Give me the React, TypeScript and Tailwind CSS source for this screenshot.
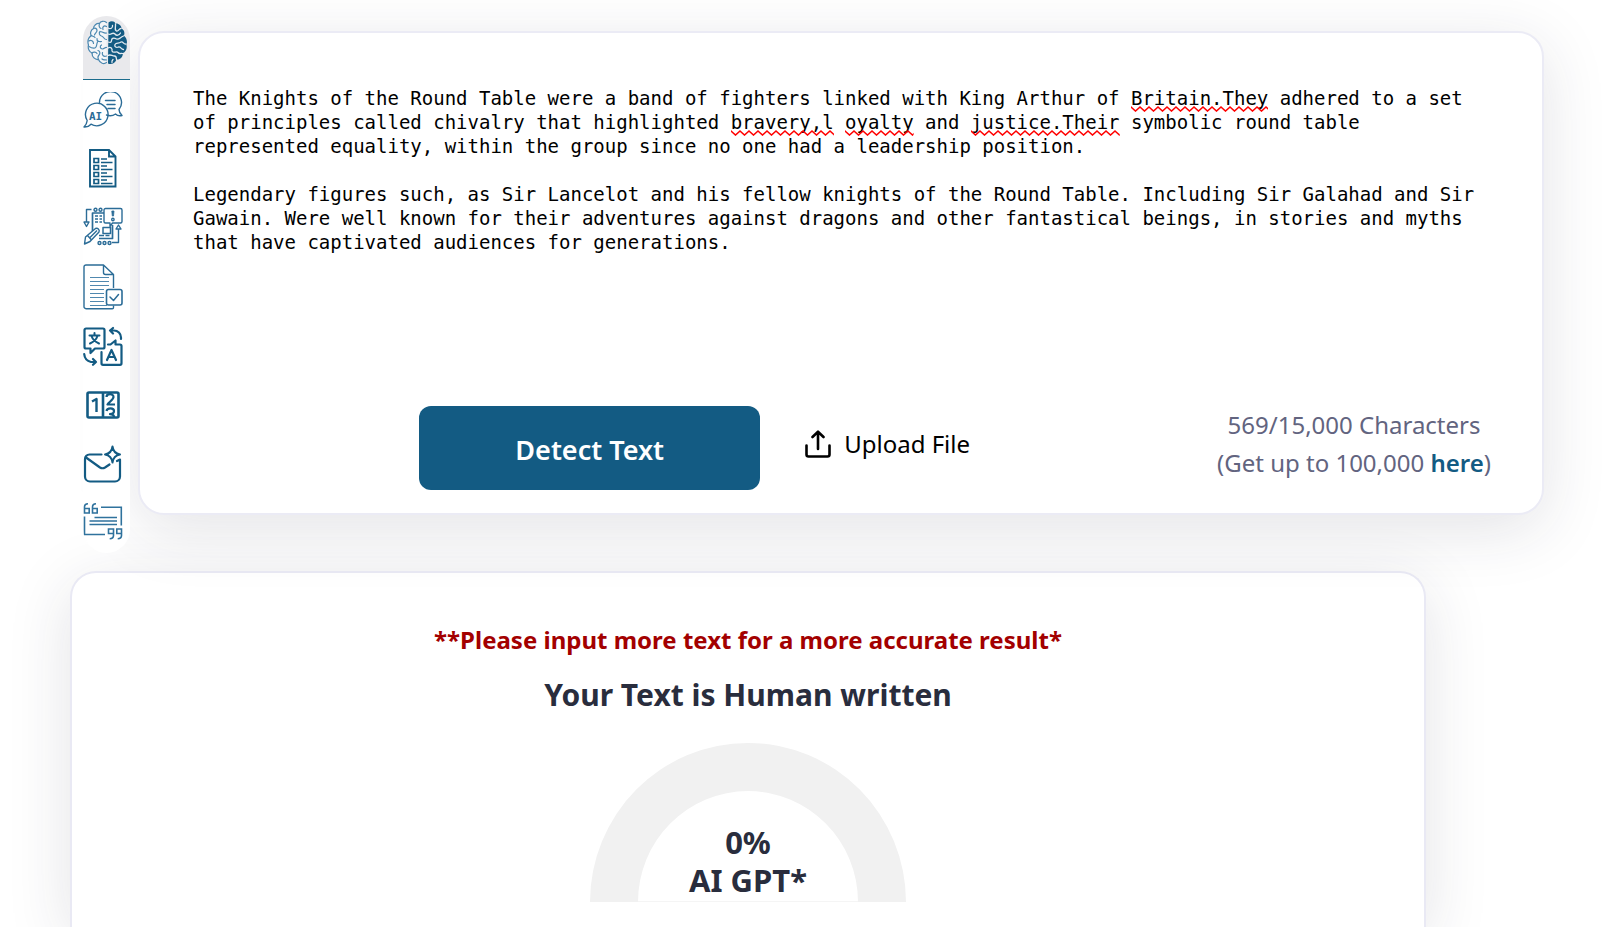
import { useState } from "react";
import type { ReactNode } from "react";

const SAMPLE =
  "The Knights of the Round Table were a band of fighters linked with King Arthur of Britain.They adhered to a set of principles called chivalry that highlighted bravery,l oyalty and justice.Their symbolic round table represented equality, within the group since no one had a leadership position.\n\nLegendary figures such, as Sir Lancelot and his fellow knights of the Round Table. Including Sir Galahad and Sir Gawain. Were well known for their adventures against dragons and other fantastical beings, in stories and myths that have captivated audiences for generations.";

const LINE_HEIGHT = 24;

// Spelling marks, addressed by row and column of the monospaced editor grid.
const MARKS = [
  { row: 0, col: 82, length: 12 },
  { row: 1, col: 47, length: 9 },
  { row: 1, col: 57, length: 6 },
  { row: 1, col: 68, length: 13 },
];

function BrainIcon() {
  return (
    <svg viewBox="0 0 40 45" className="h-[45px] w-10" fill="none" strokeLinecap="round" strokeLinejoin="round">
      <path
        fill="#f4f6f8"
        d="M19.500 2.500C17 .5 13.500 1 12.500 3.500C9.500 3 6.500 5.500 6.500 8.500C3.500 10 3 13.500 4.200 15.500C1 18 .5 22 1.500 25C.5 28.500 2.500 32 5 33C5 37 8 40 11.500 39.500C13 43.500 17 44.500 19.500 42.500Z"
      />
      <g stroke="#4c88b0" strokeWidth="1.2">
        <path d="M19.500 2.500C17 .5 13.500 1 12.500 3.500C9.500 3 6.500 5.500 6.500 8.500C3.500 10 3 13.500 4.200 15.500C1 18 .5 22 1.500 25C.5 28.500 2.500 32 5 33C5 37 8 40 11.500 39.500C13 43.500 17 44.500 19.500 42.500" />
        <path d="M19.500 6.500C17 5 15 7 16 9.500M12.500 3.500C11.500 6 12.500 8 14 8.500M6.500 8.500C8 7.500 10 8.500 10 10.500C10 12.500 8 13 7.500 15M4.200 15.500C5.500 16.500 7 16 8 17.500M13 11.500C15.500 11.500 16.500 13.500 19.500 13M13 11.500C11.500 13 12.500 15.500 14.500 16C17 16.500 16.500 19.500 19.500 19.500M1.800 21C4 19.500 6.500 21 6.500 23.500M10 18.500C9.500 21.500 12.500 22 14.500 21.500M10.500 22C9 24.500 10.500 27 8 28C5.500 28.500 3.500 27.500 2 26.500M14.500 25C12.500 26 13 29 15.500 29C17.500 29 18 27 19.500 27.500M5 33C6.500 31.500 9 32 10 33.500M11 30.500C13 31 13.500 33.500 12 35C10.500 36.500 11 38.500 11.500 39.500M15.500 32.500C14.500 35 16.500 37 19.500 36M15 39C16.500 40.500 18 39.500 19.500 40" />
      </g>
      <path
        fill="#135b83"
        d="M21.500 2.500C24 .5 27.500 1 28.500 3.500C31.500 3 34.500 5.500 34.500 8.500C37.500 10 38 13.500 36.800 15.500C40 18 40.500 22 39.500 25C40.500 28.500 38.500 32 36 33C36 37 33 40 29.500 39.500C28 43.500 24 45 21 43.500Z"
      />
      <g stroke="#e4eaf0" strokeWidth="1.3">
        <path d="M21 8C23.500 9.500 26 8 25.500 5.500M28.500 4C29 7 27 10 29.500 11C32 11.500 31.500 8.500 34 8.500M21 14C25 15.500 25 11.500 28 14C29.500 16 32 15.500 33.500 13M36.500 16C33 17 32.500 20 29.500 19C27 17.500 24.500 18 24.500 20.500C24.500 23 22.500 22.500 21 22M39 24C36 24.500 36.500 21 34 22C31.500 24 29.500 22 28 24.500C27 27 29.500 28 31.500 27C34 26.500 34 29.500 36.500 29.500M21 28C24 26 25.500 29 25 31C26.500 34 29.500 30.500 31 32.500C32.500 34.500 34 33 35.500 33.500M21 35.500C23.500 34 25 36 27.500 36C30 36 29 38.500 29.500 39.500M25 42.500C24.500 41 25.500 40 26 39.500" />
      </g>
    </svg>
  );
}

function ChatIcon() {
  return (
    <svg viewBox="0 0 40 36" className="h-9 w-10" fill="none" stroke="#2b6c97" strokeWidth="1.400" strokeLinecap="round" strokeLinejoin="round">
      <path d="M16.500 10.500A11 11 0 1 1 36 17.500C36 20 37.500 22 39 23.500C36.500 24 34 23.500 32.500 22C29 24.500 26 24 23.500 23" />
      <path d="M4.200 28.500A11.300 11.300 0 1 1 8 32.200C6 34.500 3.500 35.200 1 35C2.800 33 4 31 4.200 28.500Z" />
      <path d="M22.500 8.500H32M24 12.500H32M25 16.500H32" strokeWidth="1.500" />
      <text x="6" y="27.500" fill="#2b6c97" stroke="none" fontSize="11" fontWeight="700" className="font-['DejaVu_Sans_Mono',monospace]">
        AI
      </text>
    </svg>
  );
}

function ListIcon() {
  return (
    <svg viewBox="0 0 40 40" className="size-10" fill="none" stroke="#135b83" strokeWidth="1.900">
      <path d="M7 1H26L32.500 7.500V37.500H7ZM26 1V7.500H32.500" />
      <path d="M11 9.500H15.500V13.500H11ZM11 16.500H15.500V20.500H11ZM11 23.500H15.500V27.500H11ZM11 30.500H15.500V34.500H11Z" strokeWidth="1.700" />
      <path d="M18 10H24M18 13.500H29.500M18 17H24M18 20.500H29.500M18 24H24M18 27.500H29.500M18 31H24M18 34.500H29.500" strokeWidth="1.500" />
    </svg>
  );
}

function WorkflowIcon() {
  return (
    <svg viewBox="0 0 40 42" className="h-[42px] w-10" fill="none" stroke="#2b6c97" strokeWidth="1.400" strokeLinejoin="round">
      <path d="M8.500 2.500H3.500V15M1 15H6L3.500 19.500ZM35.500 22V35.500H29M33 22H38L35.500 18Z" />
      <circle cx="12.500" cy="2.700" r="1.500" />
      <circle cx="17.500" cy="2.700" r="1.500" />
      <circle cx="16.500" cy="36" r="1.500" />
      <circle cx="21.500" cy="36" r="1.500" />
      <circle cx="26.500" cy="36" r="1.500" />
      <path d="M21 6H9.500V24M16 31.500H29.500V18" strokeWidth="1.700" />
      <path d="M22.500 1.500H37.500A1.500 1.500 0 0 1 39 3V14.500A1.500 1.500 0 0 1 37.500 16H29.500L27 19.500V16H22.500A1.500 1.500 0 0 1 21 14.500V3A1.500 1.500 0 0 1 22.500 1.500Z" />
      <path d="M28.800 4H31L30.500 9H29.300Z" fill="#2b6c97" strokeWidth=".8" />
      <circle cx="29.900" cy="12.500" r="1.200" />
      <path d="M12 9H15M12 12H15M12 15H15M16.500 9H19M16.500 12H19M16.500 15H19M16 28.500H21M22.500 28.500H26.500" />
      <path d="M20 20.500H27.500V26.500H20Z" strokeWidth="1.500" />
      <path d="M2.500 30L12.500 21.500C14.500 20.500 17 22.500 16 25L7 34.500L1.500 37ZM4.500 28.500L8.500 33M6.500 31L14 23.500" />
    </svg>
  );
}

function DocumentCheckIcon() {
  return (
    <svg viewBox="0 0 40 46" className="h-[46px] w-10" fill="none" stroke="#2b6c97" strokeWidth="1.400" strokeLinejoin="round">
      <path d="M23.500 44.700H3A2 2 0 0 1 1 42.700V3A2 2 0 0 1 3 1H20.500L30.500 10.500V24M20.500 1V8.500A2 2 0 0 0 22.500 10.500H30.500M30.500 41.500V43.500A1.200 1.200 0 0 1 29.300 44.700H22" />
      <path d="M7 13.500H26M7 17.500H26M7 21.500H26M7 25.500H21M7 29.500H21M7 33.500H21M7 37.500H21M7 41.500H24" strokeWidth="1.100" stroke="#5088af" />
      <rect x="23.500" y="25.500" width="15.500" height="15.500" rx="2" strokeWidth="1.600" />
      <path d="M27 33L30.500 36.500L35.500 30.500" strokeLinecap="round" strokeWidth="1.500" />
    </svg>
  );
}

function TranslateIcon() {
  return (
    <svg viewBox="0 0 40 40" className="size-10" fill="none" stroke="#135b83" strokeWidth="2.200" strokeLinecap="round" strokeLinejoin="round">
      <path d="M3 2.500H20A1.500 1.500 0 0 1 21.500 4V21A1.500 1.500 0 0 1 20 22.500H12L7.500 27V22.500H3A1.500 1.500 0 0 1 1.500 21V4A1.500 1.500 0 0 1 3 2.500Z" />
      <path d="M6.500 9.500H16.500M11.500 7V9.500M8.500 10C9.500 13 12.500 16 16 17.500M14.500 10C13.500 13 10.500 16 7 17.500" strokeWidth="2" />
      <path d="M25 18.500H27.500L32.500 14.500V18.500H37A1.500 1.500 0 0 1 38.500 20V37.300A1.500 1.500 0 0 1 37 38.800H20A1.500 1.500 0 0 1 18.500 37.300V26" />
      <path d="M24 34L28.500 24L33 34M25.500 31H31.500M27 4.500H31A7 7 0 0 1 38 11.500V13M30 2L27 4.500L30 7.500M1.200 28A9 9 0 0 0 8 36H13M10 33L13 36L10 38.800" />
    </svg>
  );
}

function CounterIcon() {
  return (
    <svg viewBox="0 0 34 28" className="h-7 w-[34px]" fill="none" stroke="#135b83" strokeWidth="2.600" strokeLinejoin="round">
      <rect x="1.500" y="1.500" width="31" height="25" rx="1.500" />
      <path d="M17 2V26" />
      <path d="M6 10.500L10.500 8V21" strokeWidth="2.400" />
      <path d="M20.500 6C20.500 2.500 27.500 2 27.500 6C27.500 8.500 23 11 21.500 13.500H29M20.500 20C21 16.500 28 16.500 28 20C28 22 26 23 24 23.200C26.500 23.200 28 24 28 26" strokeWidth="2.200" />
    </svg>
  );
}

function MailSparkIcon() {
  return (
    <svg viewBox="0 0 40 40" className="size-10" fill="none" stroke="#135b83" strokeWidth="2.200" strokeLinecap="round" strokeLinejoin="round">
      <path d="M18.500 10.500H6.500A4.500 4.500 0 0 0 2 15V32.500A5 5 0 0 0 7 37.500H32A5 5 0 0 0 37 32.500V15.500L34 17" />
      <path d="M3 13.500L17 23.500Q19.500 25 22 23.500L26.500 20.500" />
      <path d="M29.500 2.500Q30.500 9.500 37 10.500Q30.500 11.500 29.500 18.500Q28.500 11.500 22 10.500Q28.500 9.500 29.500 2.500Z" strokeWidth="2" />
    </svg>
  );
}

function QuoteIcon() {
  return (
    <svg viewBox="0 0 40 40" className="size-10" fill="none" stroke="#2f729d" strokeWidth="1.600">
      <path d="M5 .8Q1.500 1 1.500 4V10H6.200V5.500H1.500M13 .8Q9.500 1 9.500 4V10H14.200V5.500H9.500" />
      <path d="M34.700 35.700Q38.500 35.500 38.500 32.500V26H33.800V30.500H38.500M26.700 35.700Q30.500 35.500 30.500 32.500V26H25.500V30.500H30.500" />
      <path d="M18 4.200H38.300V22.500M1.500 13.500V31.500H22" />
      <path d="M11.500 14.500H34M6.500 18H34M6.500 21.500H34" strokeWidth="1.500" />
    </svg>
  );
}

const TOOLS: { label: string; icon: ReactNode }[] = [
  { label: "AI chat", icon: <ChatIcon /> },
  { label: "Summarizer", icon: <ListIcon /> },
  { label: "Paraphraser", icon: <WorkflowIcon /> },
  { label: "Grammar checker", icon: <DocumentCheckIcon /> },
  { label: "Translator", icon: <TranslateIcon /> },
  { label: "Word counter", icon: <CounterIcon /> },
  { label: "Email assistant", icon: <MailSparkIcon /> },
  { label: "Citation generator", icon: <QuoteIcon /> },
];

function ToolRail() {
  return (
    <nav aria-label="Tools" className="relative z-20 mt-4 flex w-[47px] shrink-0 flex-col self-start overflow-hidden rounded-full bg-white pb-px">
      <button type="button" aria-label="AI detector" className="flex h-16 items-start justify-end border-b border-[#1b6c8c] bg-[#e9e9ec] pt-1 pr-[3px]">
        <BrainIcon />
      </button>
      {TOOLS.map((tool) => (
        <button key={tool.label} type="button" aria-label={tool.label} className="flex h-[59px] w-10 items-center justify-center">
          {tool.icon}
        </button>
      ))}
    </nav>
  );
}

function SpellingMark({ row, col, length }: { row: number; col: number; length: number }) {
  return (
    <svg
      aria-hidden="true"
      className="absolute h-[6px]"
      style={{ left: `${col}ch`, top: row * LINE_HEIGHT + 20, width: `${length}ch` }}
    >
      <defs>
        <pattern id={`wave-${row}-${col}`} width="9" height="6" patternUnits="userSpaceOnUse">
          <path d="M-1 .2L0 1L4.500 5L9 1L10 .2" fill="none" stroke="#f00" strokeWidth="1.600" />
        </pattern>
      </defs>
      <rect width="100%" height="6" fill={`url(#wave-${row}-${col})`} />
    </svg>
  );
}

function UploadIcon() {
  return (
    <svg viewBox="0 0 28 28" className="size-7" fill="none" stroke="#000" strokeWidth="2.600" strokeLinecap="round" strokeLinejoin="round">
      <path d="M2.500 15.500V24.500A2 2 0 0 0 4.500 26.500H23.500A2 2 0 0 0 25.500 24.500V15.500M14 19V2M8.500 7L14 1.700L19.500 7" />
    </svg>
  );
}

function Editor() {
  const [text, setText] = useState(SAMPLE);
  return (
    <section className="relative z-10 mt-[31px] flex h-[484px] min-w-0 flex-1 flex-col rounded-[26px] border-2 border-[#ebebf5] bg-white pt-[53px] pr-[51px] pl-[53px] shadow-[0_14px_64px_rgba(35,35,60,0.13)]">
      <div className="relative font-['DejaVu_Sans_Mono','Liberation_Mono',monospace] text-[19px] leading-6">
        <textarea
          aria-label="Text to analyse"
          spellCheck={false}
          value={text}
          onChange={(event) => setText(event.target.value)}
          className="block h-[300px] w-full resize-none overflow-hidden bg-transparent text-black outline-none"
        />
        {text === SAMPLE && MARKS.map((mark) => <SpellingMark key={`${mark.row}-${mark.col}`} {...mark} />)}
      </div>
      <div className="flex items-start">
        <div className="flex flex-1 items-start justify-end gap-11 pt-5">
          <button type="button" className="h-[84px] w-[341px] rounded-xl bg-[#135b83] pt-1 text-[27px] font-semibold text-white">
            Detect Text
          </button>
          <button type="button" className="mt-5 flex items-center gap-3 text-[24px] leading-9 text-black">
            <UploadIcon />
            Upload File
          </button>
        </div>
        <p className="pt-5 pl-[247px] text-center text-[24px] leading-[38px] text-[#62647f]">
          569/15,000 Characters
          <br />
          (Get up to 100,000{" "}
          <a href="#upgrade" className="font-semibold text-[#135b83]">
            here
          </a>
          )
        </p>
      </div>
    </section>
  );
}

function Result() {
  return (
    <section className="mt-[18px] mr-[185px] ml-[70px] flex flex-1 flex-col items-center rounded-t-[26px] border-2 border-b-0 border-[#e9e9f4] bg-white pt-[49px] shadow-[0_14px_64px_rgba(35,35,60,0.13)]">
      <p className="text-[24px] leading-9 font-bold text-[#a30000]">**Please input more text for a more accurate result*</p>
      <h1 className="mt-4 text-[30px] leading-[42px] font-bold text-[#292d3d]">Your Text is Human written</h1>
      <div className="mt-[27px] grid justify-items-center">
        <svg viewBox="0 0 316 159" className="col-start-1 row-start-1 h-[159px] w-[316px]" aria-hidden="true">
          <path d="M0 159A158 159 0 0 1 316 159H268A110 111 0 0 0 48 159Z" fill="#f1f1f1" />
          <path d="M48 158.500H268" stroke="#f5f5f5" />
        </svg>
        <p className="col-start-1 row-start-1 self-end pb-[3px] text-center text-[31px] leading-[38px] font-bold text-[#292d3d]">
          0%
          <br />
          AI GPT*
        </p>
      </div>
    </section>
  );
}

export default function App() {
  return (
    <main className="flex h-screen flex-col overflow-hidden bg-white font-['Noto_Sans','Open_Sans',sans-serif]">
      <div className="flex gap-2 pr-[67px] pl-[83px]">
        <ToolRail />
        <Editor />
      </div>
      <Result />
    </main>
  );
}
